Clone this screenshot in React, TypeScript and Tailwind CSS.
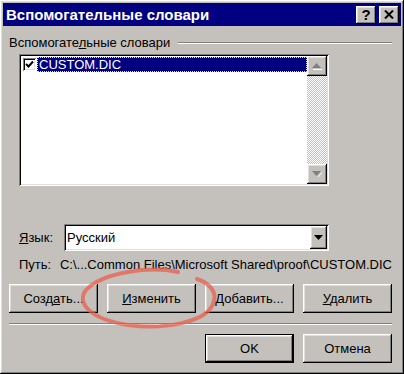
import React from "react";

const raised =
  "shadow-[inset_-1px_-1px_0_#000,inset_1px_1px_0_#fff,inset_-2px_-2px_0_#808080,inset_2px_2px_0_#dfdfdf]";
const sunken =
  "shadow-[inset_1px_1px_0_#808080,inset_-1px_-1px_0_#fff,inset_2px_2px_0_#000,inset_-2px_-2px_0_#dfdfdf]";

function Btn({ children, def }: { children: React.ReactNode; def?: boolean }) {
  return (
    <div className={def ? "w-[89px] h-[29px] border border-black" : "w-[89px] h-[29px]"}>
      <div className={`w-full h-full flex items-center justify-center bg-[#c4c0bc] ${raised}`}>
        {children}
      </div>
    </div>
  );
}

function ArrowUp() {
  return (
    <svg width="12" height="8" viewBox="0 0 12 8">
      <path d="M2 7 L11 7 L11 8 L2 8 Z" fill="#fff" />
      <path d="M1 6 L5.5 1 L10 6 Z" fill="#808080" />
    </svg>
  );
}

function ArrowDown() {
  return (
    <svg width="12" height="8" viewBox="0 0 12 8">
      <path d="M1 1 L10 1 L5.5 6 Z" fill="#808080" />
      <path d="M6.5 7 L11 2 L11 3 L7.5 7 Z" fill="#fff" />
    </svg>
  );
}

export default function App() {
  return (
    <div className="relative w-[404px] h-[374px] overflow-hidden font-['Liberation_Sans',Arial,sans-serif] text-[13px] text-black">
      <div className={`w-full h-full bg-[#c4c0bc] p-[3px] flex flex-col ${raised}`}>
        {/* Title bar */}
        <div className="h-[23px] bg-[#000080] flex items-center justify-between pl-[3px] pr-[2px]">
          <span className="text-white font-bold text-[15px] leading-none">Вспомогательные словари</span>
          <div className="flex gap-[3px]">
            <div className={`w-[20px] h-[18px] bg-[#c4c0bc] flex items-center justify-center font-bold text-[15px] leading-none ${raised}`}>
              ?
            </div>
            <div className={`w-[20px] h-[18px] bg-[#c4c0bc] flex items-center justify-center ${raised}`}>
              <svg width="10" height="9" viewBox="0 0 10 9">
                <path d="M1 0.5 L9 8.5 M9 0.5 L1 8.5" stroke="#000" strokeWidth="2" />
              </svg>
            </div>
          </div>
        </div>

        <div className="flex flex-col pl-[6px] pr-[9px]">
          {/* Group header */}
          <div className="mt-[9px] h-[15px] flex items-center gap-[8px]">
            <span className="leading-none">
              Вспомогате<u>л</u>ьные словари
            </span>
            <div className="flex-1 h-[2px] border-t border-[#808080] border-b border-b-white" />
          </div>

          {/* List box */}
          <div className={`mt-[4px] ml-[10px] w-[310px] h-[132px] bg-white p-[2px] flex ${sunken}`}>
            <div className="flex-1 flex flex-col pt-[1px]">
              <div className="flex items-center h-[15px] pl-[2px]">
                <div className="w-[13px] h-[13px] bg-white shadow-[inset_1px_1px_0_#808080,inset_-1px_-1px_0_#fff,inset_2px_2px_0_#000,inset_-2px_-2px_0_#dfdfdf] flex items-center justify-center">
                  <svg width="9" height="9" viewBox="0 0 9 9">
                    <path d="M1 4 L3.5 6.5 L8 1.5" stroke="#000" strokeWidth="2" fill="none" />
                  </svg>
                </div>
                <div className="ml-[1px] flex-1 h-[15px] bg-[#000080] border border-dotted border-[#f0e68c] flex items-center pl-[1px]">
                  <span className="text-white leading-none">CUSTOM.DIC</span>
                </div>
              </div>
            </div>
            <div className="w-[20px] flex flex-col">
              <div className={`h-[20px] bg-[#c4c0bc] flex items-center justify-center ${raised}`}>
                <ArrowUp />
              </div>
              <div className="flex-1 bg-[repeating-conic-gradient(#fff_0%_25%,#c4c0bc_0%_50%)] bg-[length:2px_2px]" />
              <div className={`h-[20px] bg-[#c4c0bc] flex items-center justify-center ${raised}`}>
                <ArrowDown />
              </div>
            </div>
          </div>

          {/* Language */}
          <div className="mt-[38px] flex items-center h-[27px]">
            <span className="w-[55px] pl-[10px] leading-none">
              <u>Я</u>зык:
            </span>
            <div className={`w-[265px] h-[27px] bg-white p-[2px] flex items-center ${sunken}`}>
              <span className="flex-1 pl-[1px] leading-none">Русский</span>
              <div className={`w-[17px] h-[23px] bg-[#c4c0bc] flex items-center justify-center ${raised}`}>
                <svg width="9" height="5" viewBox="0 0 9 5">
                  <path d="M0 0 L9 0 L4.5 5 Z" fill="#000" />
                </svg>
              </div>
            </div>
          </div>

          {/* Path */}
          <div className="mt-[5px] h-[16px] flex items-center whitespace-nowrap">
            <span className="w-[55px] pl-[10px] leading-none">Путь:</span>
            <span className="leading-none">C:\...Common Files\Microsoft Shared\proof\CUSTOM.DIC</span>
          </div>

          {/* Action buttons */}
          <div className="mt-[12px] flex gap-[9px]">
            <Btn>
              <span>
                Созд<u>а</u>ть...
              </span>
            </Btn>
            <Btn>
              <span>
                <u>И</u>зменить
              </span>
            </Btn>
            <Btn>
              <span>
                <u>Д</u>обавить...
              </span>
            </Btn>
            <Btn>
              <span>
                <u>У</u>далить
              </span>
            </Btn>
          </div>

          {/* Separator */}
          <div className="mt-[10px] h-[2px] border-t border-[#808080] border-b border-b-white" />

          {/* OK / Cancel */}
          <div className="mt-[9px] flex justify-end gap-[9px]">
            <Btn def>
              <span>OK</span>
            </Btn>
            <Btn>
              <span>Отмена</span>
            </Btn>
          </div>
        </div>
      </div>

      {/* Red hand-drawn annotation */}
      <svg
        className="absolute left-0 top-0 pointer-events-none"
        width="404"
        height="374"
        viewBox="0 0 404 374"
      >
        <path
          d="M178 272 C150 266 103 272 86 290 C76 303 90 319 128 325 C165 330 206 322 213 304 C219 290 206 282 197 279"
          stroke="#e8604c"
          strokeOpacity="0.75"
          strokeWidth="4"
          fill="none"
          strokeLinecap="round"
        />
      </svg>
    </div>
  );
}
